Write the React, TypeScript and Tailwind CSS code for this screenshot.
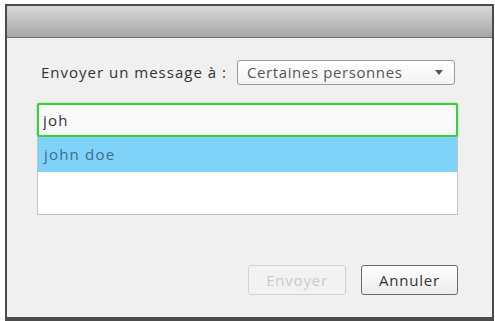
import { useState } from 'react';

const font = { fontFamily: '"Open Sans", "Noto Sans", sans-serif' };

export default function App() {
  const [query, setQuery] = useState('joh');

  return (
    <div className="w-[495px] h-[321px] bg-white pl-[5px] pt-[4px] pr-[1px]" style={font}>
      <div className="h-full flex flex-col border-x-[2px] border-t-[2px] border-b-[4px] border-[#4b4b4b]">
        {/* title bar */}
        <div className="h-[32px] shrink-0 bg-gradient-to-b from-[#d9d9d9] to-[#a6a6a6] border-b border-[#6e6e6e]" />

        {/* body */}
        <div className="flex-1 bg-[#f0f0f0] pl-[30px] pt-[22px]">
          <div className="w-[421px]">
            <div className="flex items-center justify-between">
              <span className="pl-[4px] text-[15px] tracking-[1px] text-[#333]">Envoyer un message à :</span>
              <div className="mr-[3px] w-[218px] h-[25px] flex items-center justify-between pl-[9px] pr-[11px] rounded-[3px] border border-[#9a9a9a] bg-gradient-to-b from-white to-[#f3f3f3] text-[15px] tracking-[0.6px] text-[#555]">
                <span>Certaines personnes</span>
                <svg width="8" height="5" viewBox="0 0 8 5">
                  <path d="M0 0h8L4 5z" fill="#555" />
                </svg>
              </div>
            </div>

            <div className="mt-[18px]">
              <input
                value={query}
                onChange={(e) => setQuery(e.target.value)}
                className="block w-full h-[34px] px-[4px] bg-[#fafafa] border-[2px] border-[#3ccf3c] rounded-[2px] shadow-[0_0_2px_#7ee07e] text-[15px] tracking-[1.2px] text-[#333] outline-none"
                style={font}
              />
              <div className="h-[78px] bg-white border-x border-b border-[#c4c4c4]">
                <div className="h-[35px] flex items-center pl-[6px] bg-[#7fd3f8] text-[15px] tracking-[1.2px] text-[#3d6d8c]">
                  john doe
                </div>
              </div>
            </div>

            <div className="mt-[50px] flex justify-end gap-[15px]">
              <button
                disabled
                className="w-[98px] h-[30px] rounded-[3px] border border-[#d2d2d2] bg-[#f2f2f2] text-[15px] tracking-[0.8px] text-[#cacaca]"
                style={font}
              >
                Envoyer
              </button>
              <button
                className="w-[97px] h-[30px] rounded-[3px] border border-[#6a6a6a] bg-gradient-to-b from-white to-[#ececec] text-[15px] tracking-[0.8px] text-[#333]"
                style={font}
              >
                Annuler
              </button>
            </div>
          </div>
        </div>
      </div>
    </div>
  );
}
